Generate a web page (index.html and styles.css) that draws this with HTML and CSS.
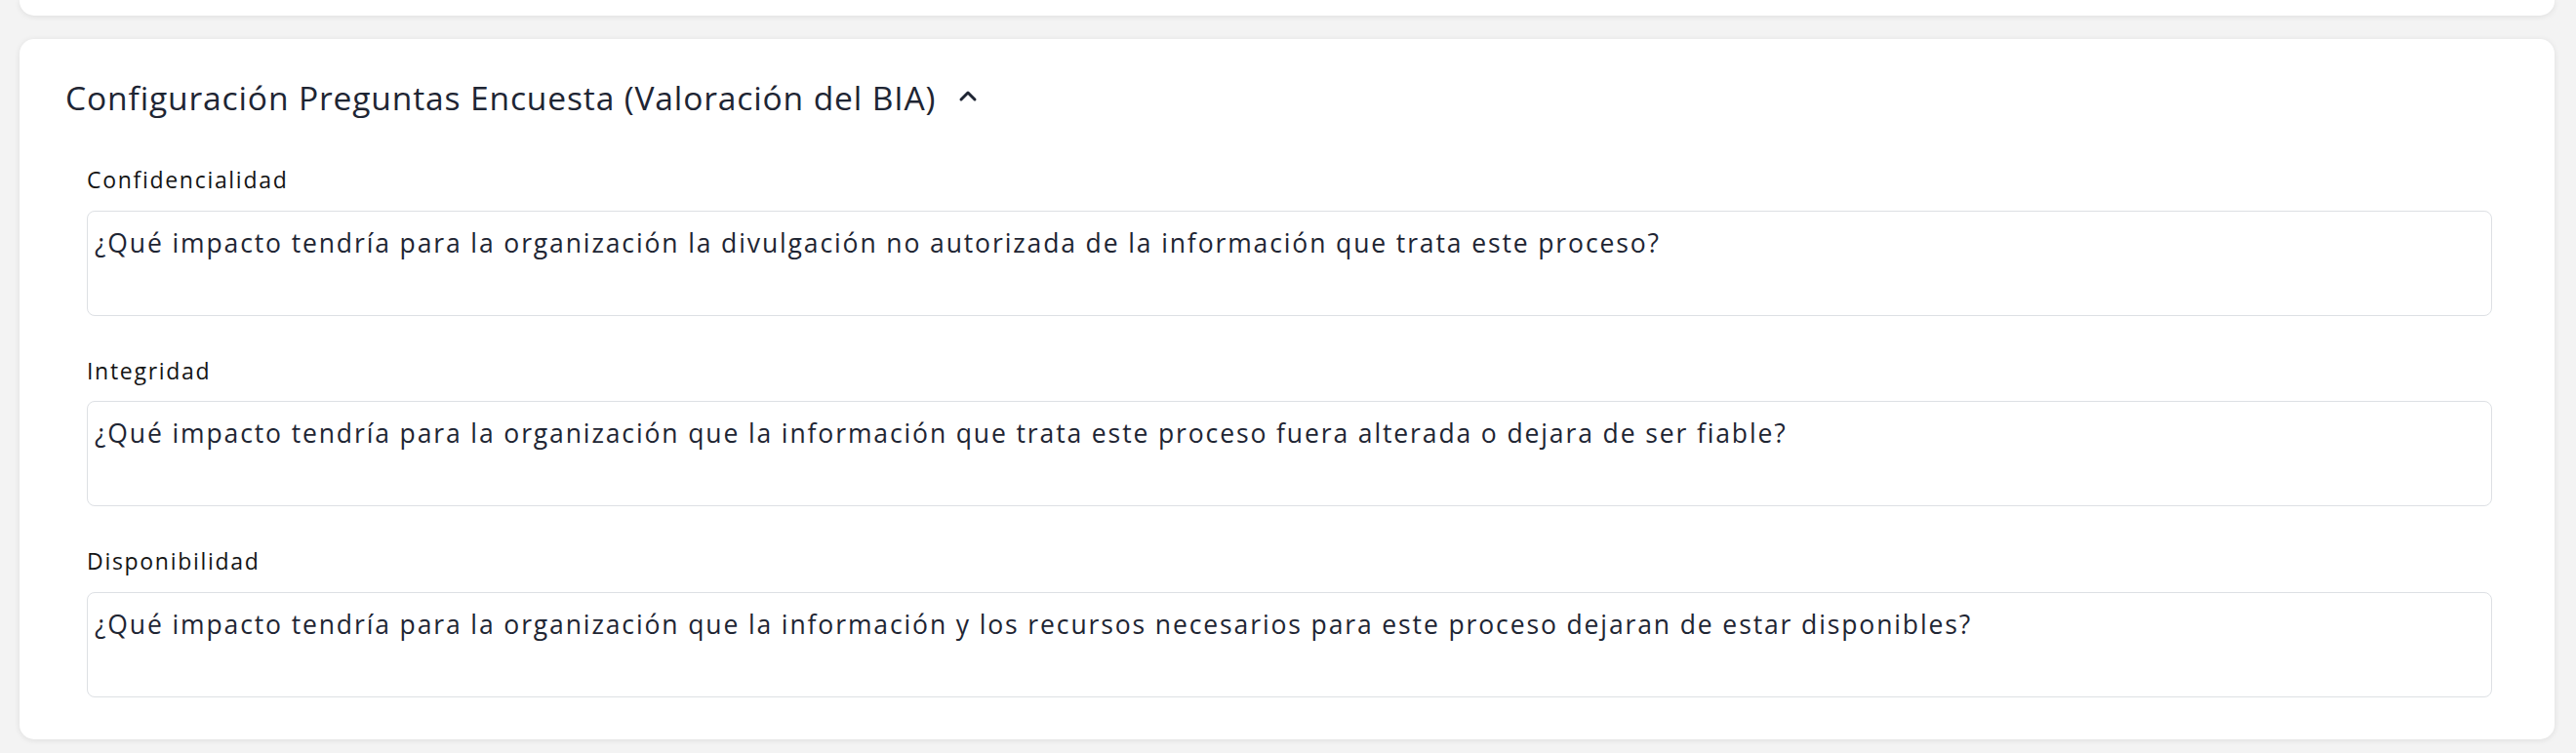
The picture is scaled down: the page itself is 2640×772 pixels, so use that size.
FILE: index.html
```html
<!DOCTYPE html>
<html lang="es">
<head>
<meta charset="utf-8">
<title>Configuración Preguntas Encuesta</title>
<link rel="stylesheet" href="styles.css">
</head>
<body>
<div class="page">
  <div class="card card-prev"></div>
  <section class="card card-main">
    <h2 class="section-title">
      <span>Configuración Preguntas Encuesta (Valoración del BIA)</span>
      <svg class="chevron" width="20" height="14" viewBox="0 0 20 14" aria-hidden="true"><polyline points="3,11 10,4 17,11" fill="none" stroke="#1e2533" stroke-width="3" stroke-linecap="round" stroke-linejoin="round"/></svg>
    </h2>
    <div class="fields">
      <div class="field">
        <label class="field-label">Confidencialidad</label>
        <textarea class="field-input">¿Qué impacto tendría para la organización la divulgación no autorizada de la información que trata este proceso?</textarea>
      </div>
      <div class="field">
        <label class="field-label">Integridad</label>
        <textarea class="field-input">¿Qué impacto tendría para la organización que la información que trata este proceso fuera alterada o dejara de ser fiable?</textarea>
      </div>
      <div class="field">
        <label class="field-label">Disponibilidad</label>
        <textarea class="field-input">¿Qué impacto tendría para la organización que la información y los recursos necesarios para este proceso dejaran de estar disponibles?</textarea>
      </div>
    </div>
  </section>
</div>
</body>
</html>
```
FILE: styles.css
```css
* { box-sizing: border-box; }
html, body {
  margin: 0;
  padding: 0;
  background: #f3f3f3;
  font-family: "Open Sans", "Noto Sans", sans-serif;
  color: #1e2533;
}
.page {
  padding: 0 22px 16px 20px;
  display: flex;
  flex-direction: column;
  gap: 24px;
}
.card {
  background: #fff;
  border-radius: 15px;
  box-shadow: 0 1px 6px rgba(0, 0, 0, 0.09);
}
.card-prev {
  height: 16px;
  border-radius: 0 0 15px 15px;
}
.card-main {
  padding: 35px 42px 3px 47px;
}
.section-title {
  margin: 0;
  display: flex;
  align-items: center;
  gap: 23px;
  font-size: 33.6px;
  line-height: 50px;
  font-weight: 400;
  color: #1e2533;
  letter-spacing: 0.85px;
}
.chevron { display: block; margin-top: -4px; }
.fields {
  padding: 43px 22px 0 22px;
  display: flex;
  flex-direction: column;
}
.field {
  display: flex;
  flex-direction: column;
  margin-bottom: 40px;
}
.field-label {
  font-size: 23px;
  line-height: 33.6px;
  color: #141414;
  margin-bottom: 14px;
  letter-spacing: 1.7px;
}
.field-input {
  display: block;
  width: 100%;
  height: 108px;
  resize: none;
  border: 1.5px solid #dde0e4;
  border-radius: 8px;
  padding: 13px 7px 0 7px;
  font-family: "Open Sans", "Noto Sans", sans-serif;
  font-size: 26.5px;
  line-height: 38.4px;
  color: #1e2533;
  background: #fff;
  letter-spacing: 1.88px;
  outline: none;
  overflow: hidden;
}
```
